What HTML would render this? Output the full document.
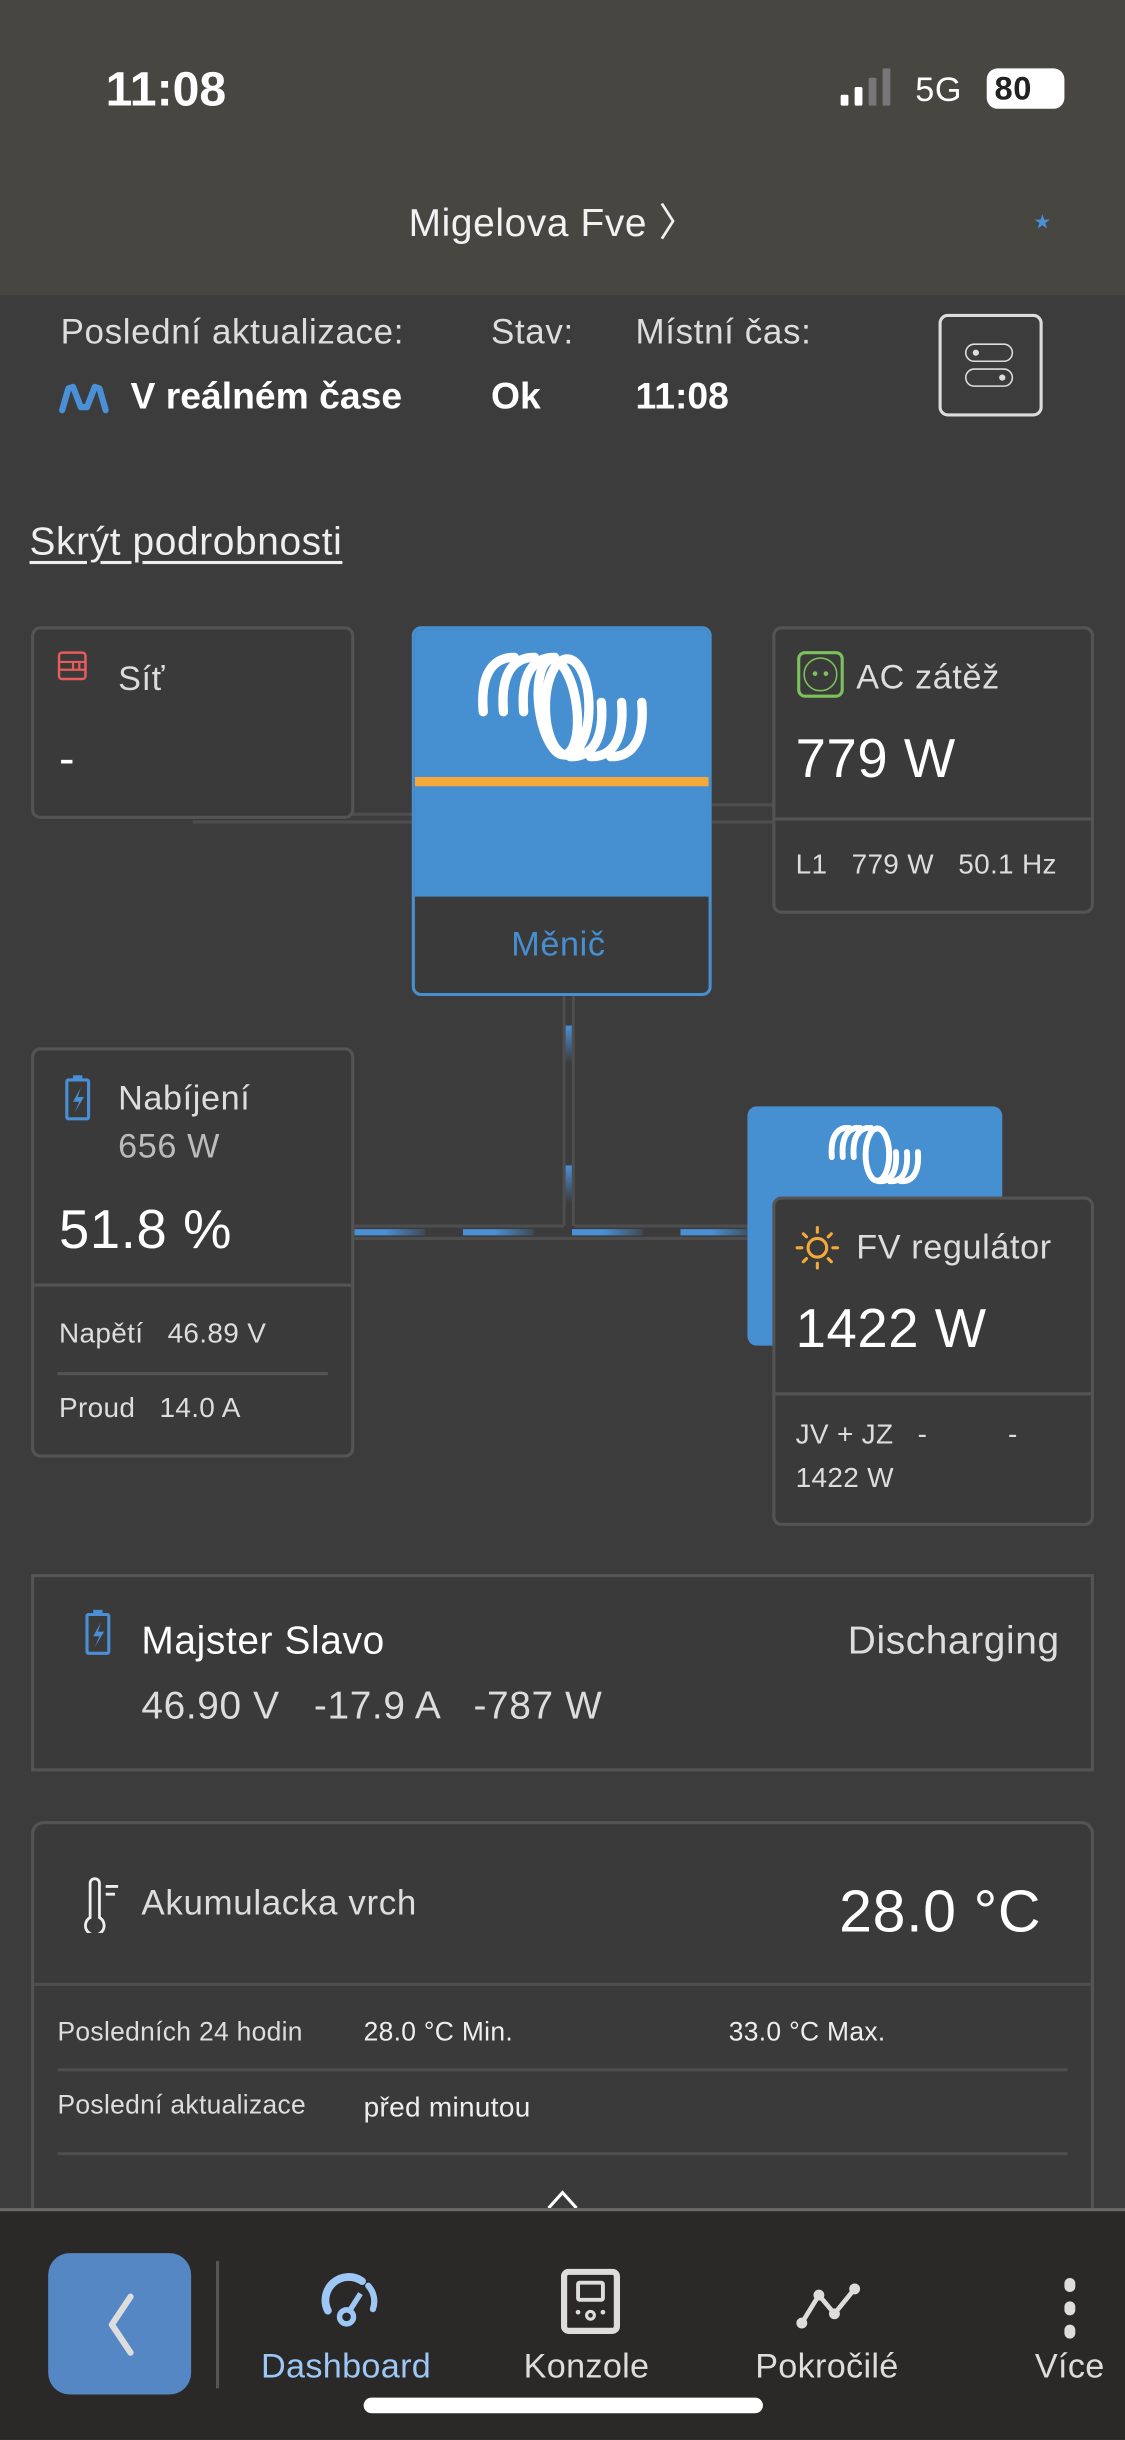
<!DOCTYPE html>
<html><head><meta charset="utf-8">
<style>
html,body{margin:0;padding:0;background:#3c3c3c;}
body{width:1125px;height:2436px;overflow:hidden;position:relative;}
#w{position:absolute;left:0;top:0;width:724px;height:1568px;transform:scale(1.5539);transform-origin:0 0;font-family:"Liberation Sans",sans-serif;color:#eee;}
.a{position:absolute;white-space:nowrap;line-height:1;letter-spacing:0.4px;}
.card{position:absolute;background:#3a3a3a;border:2px solid #545454;border-radius:6px;box-sizing:border-box;}
.hl{position:absolute;background:#4e4e4e;}
.lt{color:#ddd;}
</style></head><body><div id="w">
<!-- header -->
<div style="position:absolute;left:0;top:0;width:724px;height:190px;background:#474641"></div>
<div class="a" style="left:68px;top:42px;font-size:31px;font-weight:bold;color:#fff;letter-spacing:0">11:08</div>
<div style="position:absolute;left:541px;top:61px;width:5px;height:7px;background:#fff;border-radius:1px"></div>
<div style="position:absolute;left:550px;top:56px;width:5px;height:12px;background:#fff;border-radius:1px"></div>
<div style="position:absolute;left:559px;top:50px;width:5px;height:18px;background:#777;border-radius:1px"></div>
<div style="position:absolute;left:568px;top:44px;width:5px;height:24px;background:#777;border-radius:1px"></div>
<div class="a" style="left:589px;top:47px;font-size:22px;color:#fff">5G</div>
<div style="position:absolute;left:635px;top:44px;width:50px;height:26px;background:#fff;border-radius:7px"></div>
<div class="a" style="left:640px;top:47px;font-size:21px;font-weight:bold;color:#222">80</div>
<div class="a" style="left:263px;top:132px;font-size:25px;color:#f2f2f2">Migelova Fve 〉</div>
<div class="a" style="left:665px;top:136px;font-size:13px;color:#4a90d6">★</div>
<!-- status row -->
<div class="a lt" style="left:39px;top:203px;font-size:22.5px">Poslední aktualizace:</div>
<div class="a lt" style="left:316px;top:203px;font-size:22.5px">Stav:</div>
<div class="a lt" style="left:409px;top:203px;font-size:22.5px">Místní čas:</div>
<svg style="position:absolute;left:38px;top:246px" width="32" height="20" viewBox="0 0 32 20"><path d="M2,18 L6,4 L9,3 L14,16 L18,16 L23,3 L26,4 L30,18" fill="none" stroke="#4a90d6" stroke-width="4" stroke-linejoin="round" stroke-linecap="round"/></svg>
<div class="a" style="left:84px;top:244px;font-size:24px;font-weight:bold;color:#fff;letter-spacing:0">V reálném čase</div>
<div class="a" style="left:316px;top:244px;font-size:24px;font-weight:bold;color:#fff;letter-spacing:0">Ok</div>
<div class="a" style="left:409px;top:244px;font-size:24px;font-weight:bold;color:#fff;letter-spacing:0">11:08</div>
<div style="position:absolute;left:604px;top:202px;width:67px;height:66px;border:2px solid #ddd;border-radius:6px;box-sizing:border-box"></div>
<div style="position:absolute;left:621px;top:221px;width:31px;height:12px;border:1.5px solid #ddd;border-radius:7px;box-sizing:border-box"></div>
<div style="position:absolute;left:626px;top:225px;width:4px;height:4px;background:#ddd;border-radius:50%"></div>
<div style="position:absolute;left:621px;top:237px;width:31px;height:12px;border:1.5px solid #ddd;border-radius:7px;box-sizing:border-box"></div>
<div style="position:absolute;left:643px;top:241px;width:4px;height:4px;background:#ddd;border-radius:50%"></div>
<div class="a" style="left:19px;top:337px;font-size:25px;color:#eee;text-decoration:underline;text-underline-offset:4px">Skrýt podrobnosti</div>

<!-- connector lines -->
<div class="hl" style="left:124px;top:523px;width:142px;height:2px"></div>
<div class="hl" style="left:124px;top:528px;width:142px;height:2px"></div>
<div class="hl" style="left:458px;top:517px;width:40px;height:2px"></div>
<div class="hl" style="left:458px;top:528px;width:40px;height:2px"></div>
<div class="hl" style="left:362px;top:641px;width:2px;height:148px"></div>
<div class="hl" style="left:368px;top:641px;width:2px;height:148px"></div>
<div style="position:absolute;left:364px;top:660px;width:4px;height:24px;background:linear-gradient(#4a90d6,transparent)"></div>
<div style="position:absolute;left:364px;top:750px;width:4px;height:24px;background:linear-gradient(#4a90d6,transparent)"></div>
<div class="hl" style="left:228px;top:788px;width:135px;height:2px"></div>
<div class="hl" style="left:370px;top:788px;width:128px;height:2px"></div>
<div class="hl" style="left:228px;top:796px;width:270px;height:2px"></div>
<div style="position:absolute;left:228px;top:791px;width:270px;height:4px;background:repeating-linear-gradient(90deg,#4a90d6 0,#4a90d6 20px,rgba(74,144,214,0.2) 45px,transparent 46px,transparent 70px)"></div>

<!-- Síť -->
<div class="card" style="left:20px;top:403px;width:208px;height:124px"></div>
<svg style="position:absolute;left:37px;top:419px" width="19" height="19" viewBox="0 0 19 19"><rect x="1" y="1" width="17" height="17" rx="2" fill="none" stroke="#e85c5c" stroke-width="1.6"/><path d="M1,7 H18 M1,12 H18 M10,7 V12 M14,7 V12" stroke="#e85c5c" stroke-width="1.4"/></svg>
<div class="a lt" style="left:76px;top:426px;font-size:22px">Síť</div>
<div class="a" style="left:38px;top:474px;font-size:30px;color:#fff">-</div>

<!-- inverter -->
<div style="position:absolute;left:265px;top:403px;width:193px;height:238px;border:2px solid #468fd1;border-radius:6px;box-sizing:border-box;background:#3a3a3a;overflow:hidden">
 <div style="position:absolute;left:0;top:0;width:193px;height:172px;background:#468fd1"></div>
 <div style="position:absolute;left:0;top:95px;width:193px;height:6px;background:#f5a93b"></div>
</div>
<svg style="position:absolute;left:307px;top:420px" width="110" height="70" viewBox="0 0 110 70"><g fill="none" stroke="#fff" stroke-width="6" stroke-linecap="round"><path d="M4,38 C2,14 10,3 24,3"/><path d="M17,38 C15,14 23,3 37,3"/><path d="M30,38 C28,14 36,3 50,3"/><ellipse cx="58" cy="35" rx="14" ry="31"/><ellipse cx="52" cy="35" rx="12" ry="31" transform="rotate(-8 52 35)"/><path d="M106,32 C108,56 100,67 86,67"/><path d="M93,32 C95,56 87,67 73,67"/><path d="M80,32 C82,56 74,67 60,67"/></g></svg>
<div class="a" style="left:329px;top:597px;font-size:22px;color:#468fd1">Měnič</div>

<!-- AC -->
<div class="card" style="left:497px;top:403px;width:207px;height:185px"></div>
<div class="hl" style="left:499px;top:526px;width:203px;height:2px;background:#545454"></div>
<div style="position:absolute;left:513px;top:419px;width:30px;height:30px;border:2px solid #7cc25a;border-radius:5px;box-sizing:border-box"></div>
<div style="position:absolute;left:517px;top:423px;width:22px;height:22px;border:1.5px solid #7cc25a;border-radius:50%;box-sizing:border-box"></div>
<div style="position:absolute;left:523px;top:432px;width:3px;height:3px;background:#7cc25a;border-radius:50%"></div>
<div style="position:absolute;left:530px;top:432px;width:3px;height:3px;background:#7cc25a;border-radius:50%"></div>
<div class="a lt" style="left:551px;top:425px;font-size:22px">AC zátěž</div>
<div class="a" style="left:512px;top:471px;font-size:35px;color:#fff">779 W</div>
<div class="a lt" style="left:512px;top:547px;font-size:18px;letter-spacing:0.2px">L1 &nbsp;&nbsp;779 W &nbsp;&nbsp;50.1 Hz</div>

<!-- Nabíjení -->
<div class="card" style="left:20px;top:674px;width:208px;height:264px"></div>
<div class="hl" style="left:22px;top:826px;width:204px;height:2px;background:#545454"></div>
<div class="hl" style="left:37px;top:883px;width:174px;height:2px;background:#545454"></div>
<svg style="position:absolute;left:40px;top:690px" width="22" height="32" viewBox="0 0 22 32"><rect x="3" y="5" width="14" height="25" rx="1" fill="none" stroke="#4a90d6" stroke-width="2"/><rect x="7" y="2" width="6" height="3" fill="#4a90d6"/><path d="M12,10 L7,19 H11 L8,26 L14,16 H10 Z" fill="#4a90d6"/></svg>
<div class="a lt" style="left:76px;top:696px;font-size:22px">Nabíjení</div>
<div class="a" style="left:76px;top:727px;font-size:22px;color:#bbb">656 W</div>
<div class="a" style="left:38px;top:774px;font-size:35px;color:#fff">51.8 %</div>
<div class="a lt" style="left:38px;top:849px;font-size:18px;letter-spacing:0.2px">Napětí &nbsp;&nbsp;46.89 V</div>
<div class="a lt" style="left:38px;top:897px;font-size:18px;letter-spacing:0.2px">Proud &nbsp;&nbsp;14.0 A</div>

<!-- solar charger -->
<div style="position:absolute;left:481px;top:712px;width:164px;height:154px;background:#468fd1;border-radius:6px"></div>
<svg style="position:absolute;left:533px;top:724px" width="60" height="38" viewBox="0 0 110 70"><g fill="none" stroke="#fff" stroke-width="7" stroke-linecap="round"><path d="M4,38 C2,14 10,3 24,3"/><path d="M17,38 C15,14 23,3 37,3"/><path d="M30,38 C28,14 36,3 50,3"/><ellipse cx="58" cy="35" rx="14" ry="31"/><path d="M106,32 C108,56 100,67 86,67"/><path d="M93,32 C95,56 87,67 73,67"/><path d="M80,32 C82,56 74,67 60,67"/></g></svg>
<div class="card" style="left:497px;top:770px;width:207px;height:212px"></div>
<div class="hl" style="left:499px;top:896px;width:203px;height:2px;background:#545454"></div>
<svg style="position:absolute;left:511px;top:788px" width="30" height="30" viewBox="0 0 30 30"><circle cx="15" cy="15" r="6" fill="none" stroke="#f5a93b" stroke-width="2"/><g stroke="#f5a93b" stroke-width="2" stroke-linecap="round"><path d="M15,2V5M15,25V28M2,15H5M25,15H28M6,6L8,8M22,22L24,24M6,24L8,22M22,8L24,6"/></g></svg>
<div class="a lt" style="left:551px;top:792px;font-size:22px">FV regulátor</div>
<div class="a" style="left:512px;top:838px;font-size:35px;color:#fff">1422 W</div>
<div class="a lt" style="left:512px;top:914px;font-size:18px;letter-spacing:0.2px">JV + JZ &nbsp;&nbsp;- &nbsp;&nbsp;&nbsp;&nbsp;&nbsp;&nbsp;&nbsp;&nbsp;&nbsp;-</div>
<div class="a lt" style="left:512px;top:942px;font-size:18px;letter-spacing:0.2px">1422 W</div>

<!-- Majster -->
<div class="card" style="left:20px;top:1013px;width:684px;height:127px;border-radius:0"></div>
<svg style="position:absolute;left:53px;top:1034px" width="22" height="32" viewBox="0 0 22 32"><rect x="3" y="5" width="14" height="25" rx="1" fill="none" stroke="#4a90d6" stroke-width="2"/><rect x="7" y="2" width="6" height="3" fill="#4a90d6"/><path d="M12,10 L7,19 H11 L8,26 L14,16 H10 Z" fill="#4a90d6"/></svg>
<div class="a" style="left:91px;top:1044px;font-size:25px;color:#fff">Majster Slavo</div>
<div class="a lt" style="right:42px;top:1044px;font-size:25px">Discharging</div>
<div class="a lt" style="left:91px;top:1086px;font-size:25px">46.90 V &nbsp;&nbsp;-17.9 A &nbsp;&nbsp;-787 W</div>

<!-- temp -->
<div class="card" style="left:20px;top:1172px;width:684px;height:300px;border-radius:8px 8px 0 0"></div>
<div class="hl" style="left:22px;top:1276px;width:680px;height:2px;background:#4e4e4e"></div>
<svg style="position:absolute;left:52px;top:1208px" width="30" height="36" viewBox="0 0 30 36"><path d="M6,26 V4 a3,3 0 0 1 6,0 V26 a6,6 0 1 1 -6,0 Z" fill="none" stroke="#eee" stroke-width="1.8"/><path d="M16,6H24M16,11H22" stroke="#eee" stroke-width="1.8"/></svg>
<div class="a lt" style="left:91px;top:1214px;font-size:22.5px">Akumulacka vrch</div>
<div class="a" style="right:54px;top:1212px;font-size:38px;color:#fff">28.0 °C</div>
<div class="a lt" style="left:37px;top:1299px;font-size:17px;letter-spacing:0.2px">Posledních 24 hodin</div>
<div class="a" style="left:234px;top:1299px;font-size:17px;color:#eee;letter-spacing:0.2px">28.0 °C Min.</div>
<div class="a" style="left:469px;top:1299px;font-size:17px;color:#eee;letter-spacing:0.2px">33.0 °C Max.</div>
<div class="hl" style="left:37px;top:1331px;width:650px;height:2px"></div>
<div class="a lt" style="left:37px;top:1346px;font-size:17px;letter-spacing:0.2px">Poslední aktualizace</div>
<div class="a" style="left:234px;top:1347px;font-size:18px;color:#eee;letter-spacing:0.2px">před minutou</div>
<div class="hl" style="left:37px;top:1385px;width:650px;height:2px"></div>
<svg style="position:absolute;left:351px;top:1408px" width="22" height="14" viewBox="0 0 22 14"><path d="M2,13 L11,3 L20,13" fill="none" stroke="#fff" stroke-width="2"/></svg>

<!-- nav -->
<div style="position:absolute;left:0;top:1421px;width:724px;height:147px;background:#2a2928;border-top:2px solid #6a6a68"></div>
<div style="position:absolute;left:31px;top:1450px;width:92px;height:91px;background:#5587c4;border-radius:14px"></div>
<svg style="position:absolute;left:62px;top:1474px" width="30" height="44" viewBox="0 0 30 44"><path d="M22,4 L10,22 L22,40" fill="none" stroke="#ddd" stroke-width="4" stroke-linecap="round" stroke-linejoin="round"/></svg>
<div style="position:absolute;left:139px;top:1455px;width:2px;height:82px;background:#555"></div>
<svg style="position:absolute;left:205px;top:1462px" width="40" height="40" viewBox="0 0 40 40"><path d="M6,25 A15,15 0 0 1 28,6" fill="none" stroke="#9dc8f5" stroke-width="5" stroke-linecap="round"/><path d="M32,9 A15,15 0 0 1 35,24" fill="none" stroke="#9dc8f5" stroke-width="4" stroke-linecap="round"/><circle cx="18" cy="29" r="4.5" fill="none" stroke="#9dc8f5" stroke-width="3.5"/><path d="M20,25 L27,14" stroke="#9dc8f5" stroke-width="3.5"/></svg>
<div class="a" style="left:168px;top:1512px;font-size:22px;color:#9dc8f5;letter-spacing:0.2px">Dashboard</div>
<svg style="position:absolute;left:361px;top:1460px" width="40" height="42" viewBox="0 0 40 42"><rect x="2" y="2" width="34" height="38" rx="3" fill="none" stroke="#ddd" stroke-width="4"/><rect x="11" y="9" width="16" height="11" rx="1" fill="none" stroke="#ddd" stroke-width="2.5"/><circle cx="19" cy="30" r="2.5" fill="none" stroke="#ddd" stroke-width="2"/><circle cx="11" cy="28" r="1.5" fill="#ddd"/><circle cx="27" cy="28" r="1.5" fill="#ddd"/></svg>
<div class="a" style="left:337px;top:1512px;font-size:22px;color:#ddd;letter-spacing:0.2px">Konzole</div>
<svg style="position:absolute;left:512px;top:1464px" width="48" height="36" viewBox="0 0 48 36"><path d="M4,31 L15,13 L25,25 L38,9" fill="none" stroke="#ddd" stroke-width="3"/><circle cx="4" cy="31" r="3.5" fill="#ddd"/><circle cx="15" cy="13" r="3.5" fill="#ddd"/><circle cx="25" cy="25" r="3.5" fill="#ddd"/><circle cx="38" cy="9" r="3.5" fill="#ddd"/></svg>
<div class="a" style="left:486px;top:1512px;font-size:22px;color:#ddd;letter-spacing:0.2px">Pokročilé</div>
<div style="position:absolute;left:685px;top:1466px;width:7px;height:9px;background:#ddd;border-radius:4px"></div>
<div style="position:absolute;left:685px;top:1481px;width:7px;height:9px;background:#ddd;border-radius:4px"></div>
<div style="position:absolute;left:685px;top:1496px;width:7px;height:9px;background:#ddd;border-radius:4px"></div>
<div class="a" style="left:666px;top:1512px;font-size:22px;color:#ddd;letter-spacing:0.2px">Více</div>
<div style="position:absolute;left:234px;top:1543px;width:257px;height:10px;background:#fff;border-radius:5px"></div>
</div></body></html>
